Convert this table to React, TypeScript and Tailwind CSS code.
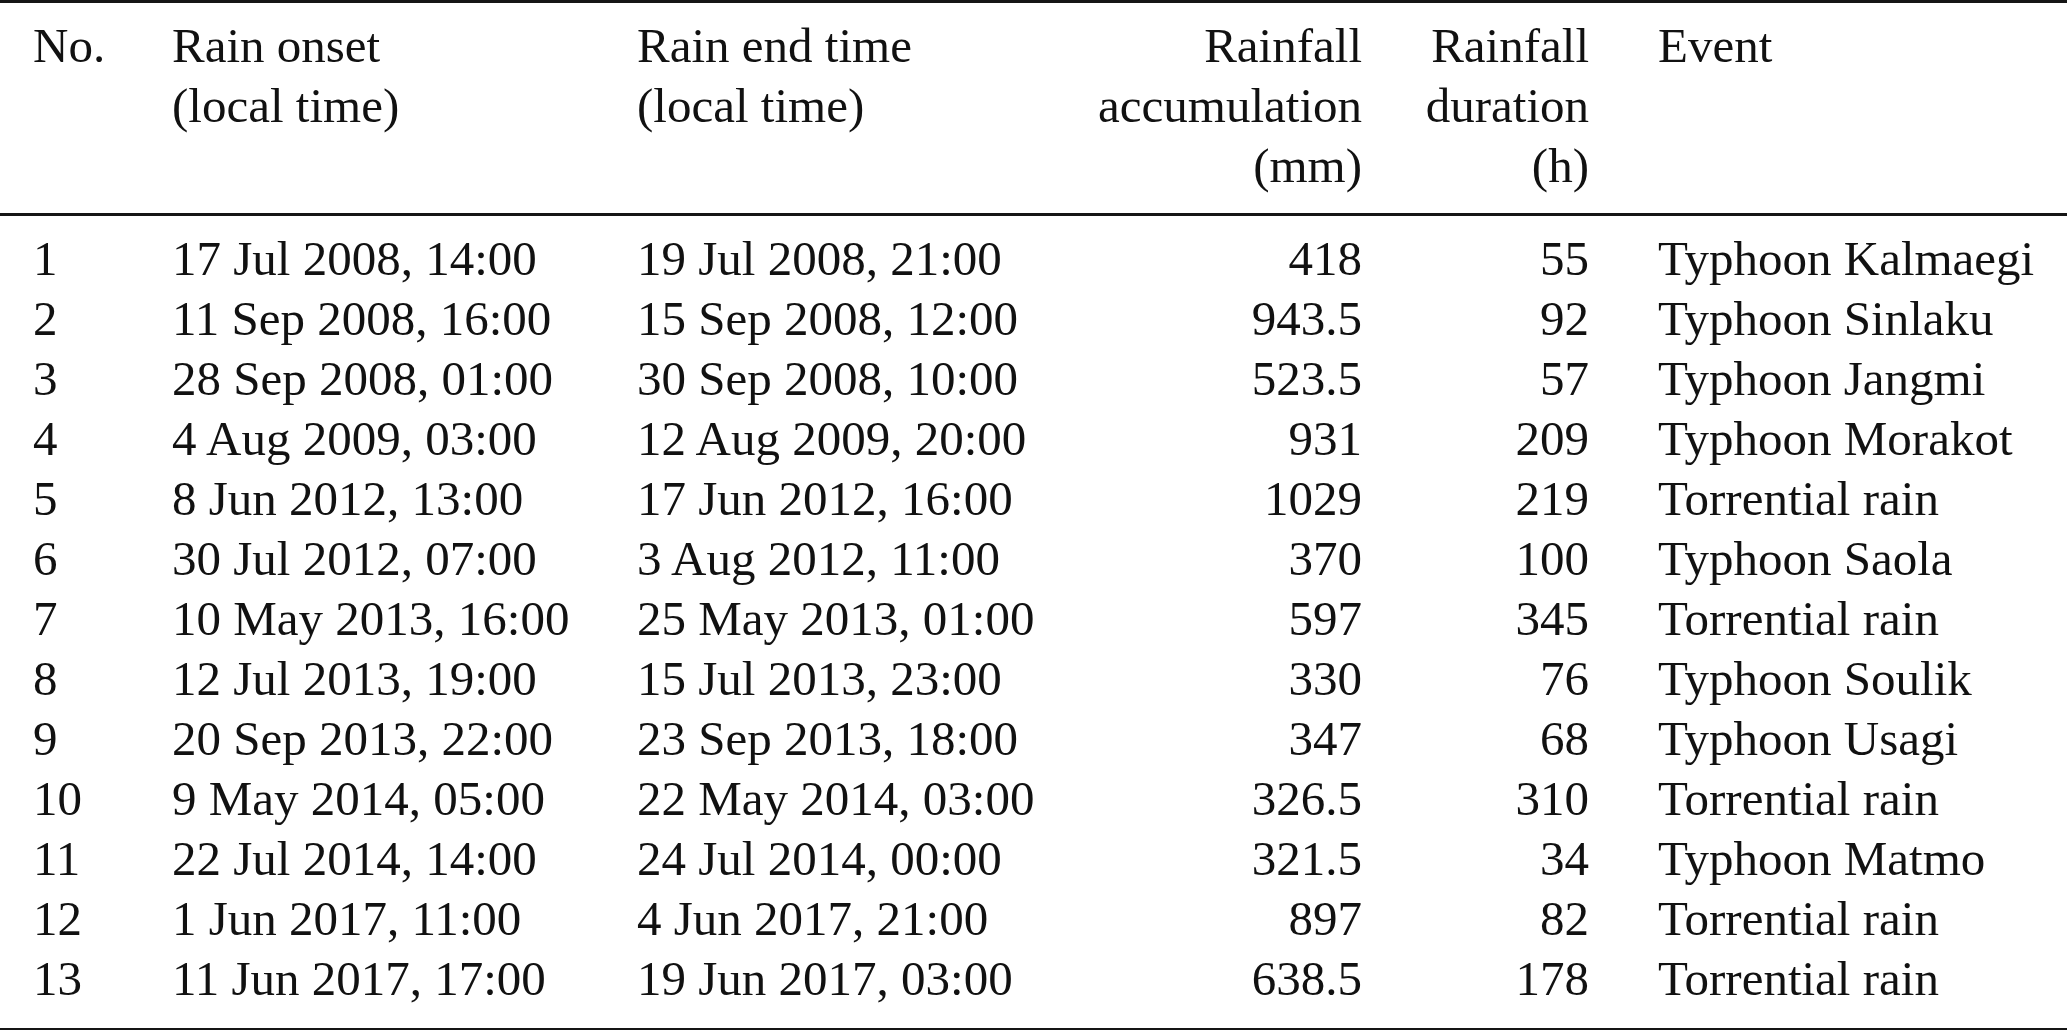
import React from 'react';

interface RainEvent {
  no: number;
  onset: string;
  end: string;
  accumulation: string;
  duration: number;
  event: string;
}

const events: RainEvent[] = [
  { no: 1, onset: '17 Jul 2008, 14:00', end: '19 Jul 2008, 21:00', accumulation: '418', duration: 55, event: 'Typhoon Kalmaegi' },
  { no: 2, onset: '11 Sep 2008, 16:00', end: '15 Sep 2008, 12:00', accumulation: '943.5', duration: 92, event: 'Typhoon Sinlaku' },
  { no: 3, onset: '28 Sep 2008, 01:00', end: '30 Sep 2008, 10:00', accumulation: '523.5', duration: 57, event: 'Typhoon Jangmi' },
  { no: 4, onset: '4 Aug 2009, 03:00', end: '12 Aug 2009, 20:00', accumulation: '931', duration: 209, event: 'Typhoon Morakot' },
  { no: 5, onset: '8 Jun 2012, 13:00', end: '17 Jun 2012, 16:00', accumulation: '1029', duration: 219, event: 'Torrential rain' },
  { no: 6, onset: '30 Jul 2012, 07:00', end: '3 Aug 2012, 11:00', accumulation: '370', duration: 100, event: 'Typhoon Saola' },
  { no: 7, onset: '10 May 2013, 16:00', end: '25 May 2013, 01:00', accumulation: '597', duration: 345, event: 'Torrential rain' },
  { no: 8, onset: '12 Jul 2013, 19:00', end: '15 Jul 2013, 23:00', accumulation: '330', duration: 76, event: 'Typhoon Soulik' },
  { no: 9, onset: '20 Sep 2013, 22:00', end: '23 Sep 2013, 18:00', accumulation: '347', duration: 68, event: 'Typhoon Usagi' },
  { no: 10, onset: '9 May 2014, 05:00', end: '22 May 2014, 03:00', accumulation: '326.5', duration: 310, event: 'Torrential rain' },
  { no: 11, onset: '22 Jul 2014, 14:00', end: '24 Jul 2014, 00:00', accumulation: '321.5', duration: 34, event: 'Typhoon Matmo' },
  { no: 12, onset: '1 Jun 2017, 11:00', end: '4 Jun 2017, 21:00', accumulation: '897', duration: 82, event: 'Torrential rain' },
  { no: 13, onset: '11 Jun 2017, 17:00', end: '19 Jun 2017, 03:00', accumulation: '638.5', duration: 178, event: 'Torrential rain' },
];

// column template shared by header and body rows
const cols = 'grid grid-cols-[139px_465px_400px_325px_227px_1fr] pl-[33px]';

export default function App() {
  return (
    <div className="w-[2067px] h-[1030px] bg-white text-[#111] font-['Liberation_Serif',serif] text-[49px] leading-[60px]">
      <div className="border-t-[3px] border-b-[3px] border-[#151515]">
        <div className={`${cols} pt-[13px] pb-[17px] border-b-[3px] border-[#151515]`}>
          <div>No.</div>
          <div>
            Rain onset
            <br />
            (local time)
          </div>
          <div>
            Rain end time
            <br />
            (local time)
          </div>
          <div className="text-right">
            Rainfall
            <br />
            accumulation
            <br />
            (mm)
          </div>
          <div className="text-right">
            Rainfall
            <br />
            duration
            <br />
            (h)
          </div>
          <div className="pl-[69px]">Event</div>
        </div>

        <div className="pt-[13px] pb-[19px]">
          {events.map((row) => (
            <div key={row.no} className={cols}>
              <div>{row.no}</div>
              <div>{row.onset}</div>
              <div>{row.end}</div>
              <div className="text-right">{row.accumulation}</div>
              <div className="text-right">{row.duration}</div>
              <div className="pl-[69px] whitespace-nowrap">{row.event}</div>
            </div>
          ))}
        </div>
      </div>
    </div>
  );
}
